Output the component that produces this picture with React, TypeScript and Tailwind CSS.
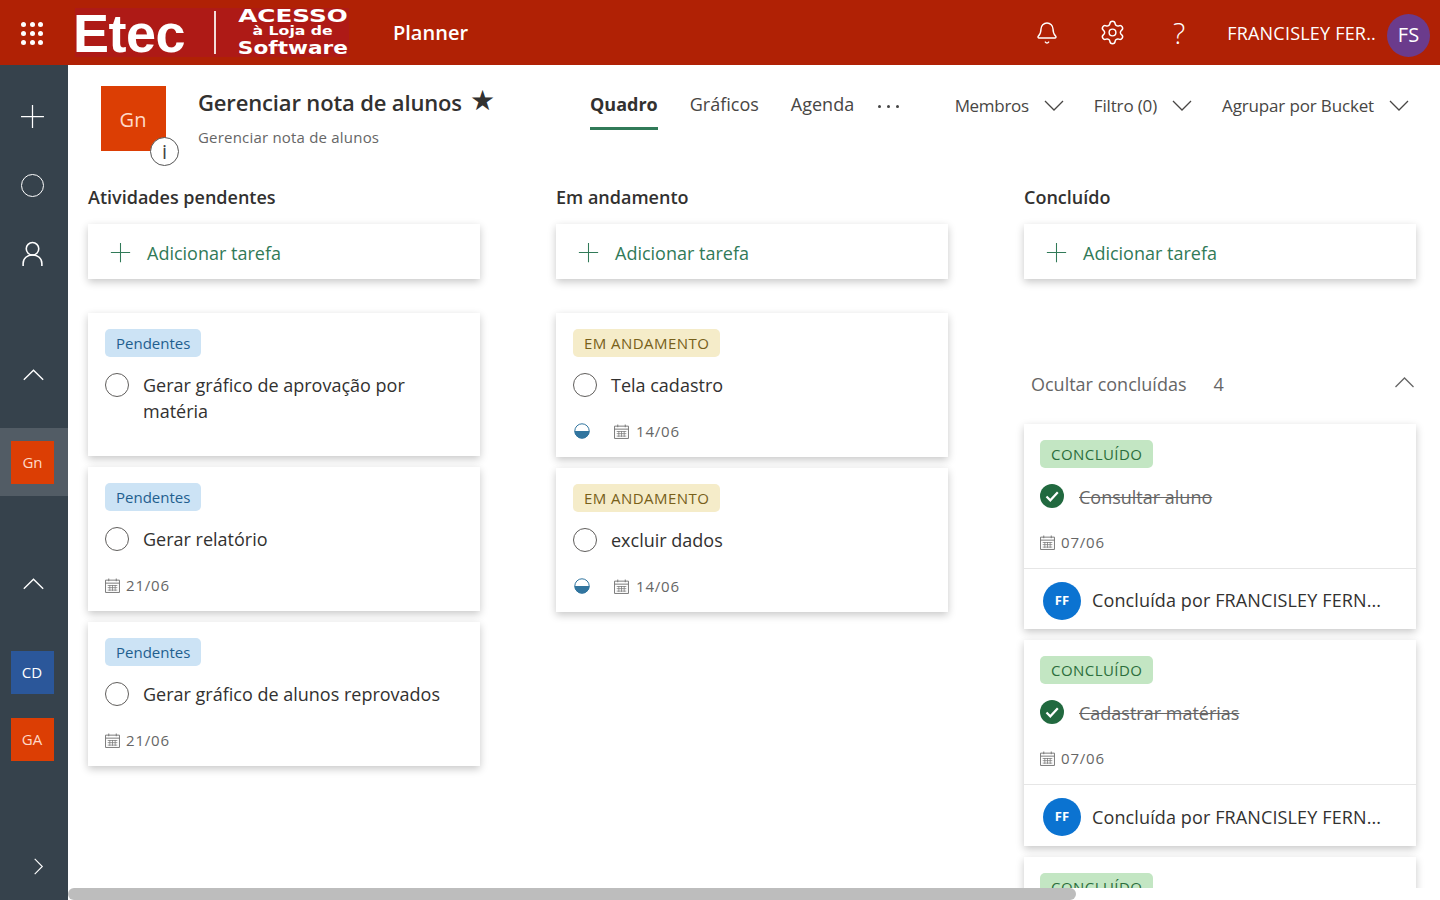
import { Bell, Settings } from 'lucide-react';

const sans = "font-['Open_Sans',sans-serif]";

const tagStyles = {
  blue: 'bg-[#cce3f5] text-[#1f5f8f]',
  yellow: 'bg-[#f5ecc9] text-[#77601a] tracking-[0.45px]',
  green: 'bg-[#c3e6c3] text-[#2c6e3c] tracking-[0.45px]',
};

type Tag = keyof typeof tagStyles;

function Plus({ className }: { className: string }) {
  return (
    <svg viewBox="0 0 24 24" className={className} fill="none" stroke="currentColor" strokeWidth="1.2">
      <path d="M12 1v22M1 12h22" />
    </svg>
  );
}

function Chevron({ dir, className }: { dir: 'up' | 'down' | 'right'; className: string }) {
  const d = dir === 'up' ? 'M1 11 10 2l9 9' : dir === 'down' ? 'M1 2l9 9 9-9' : 'M2 1l9 9-9 9';
  return (
    <svg viewBox={dir === 'right' ? '0 0 13 20' : '0 0 20 13'} className={className} fill="none" stroke="currentColor" strokeWidth="1.3">
      <path d={d} />
    </svg>
  );
}

function CalendarIcon() {
  return (
    <svg viewBox="1 1 14 14" className="h-[15px] w-[15px] shrink-0 text-[#777]" fill="none" stroke="currentColor" strokeWidth="0.9">
      <path d="M1.500 3h13v11.500h-13zM1.500 5.800h13M4.500 1.500V4M11.500 1.500V4" />
      <path d="M3.500 8h9M3.500 10h9M3.500 12.300h9M5.500 7.500v5.500M8 7.500v5.500M10.500 7.500v5.500" strokeWidth="0.7" />
    </svg>
  );
}

function HalfDone() {
  return (
    <svg viewBox="0 0 16 16" className="h-4 w-4 shrink-0">
      <circle cx="8" cy="8" r="7.200" fill="#fff" stroke="#31759f" strokeWidth="1" />
      <path d="M0.500 8a7.500 7.500 0 0 0 15 0z" fill="#31759f" />
    </svg>
  );
}

function Circle() {
  return <span className="h-6 w-6 shrink-0 rounded-full border-[1.5px] border-[#605e5c]" />;
}

function Checked() {
  return (
    <svg viewBox="0 0 24 24" className="h-6 w-6 shrink-0">
      <circle cx="12" cy="12" r="12" fill="#21693f" />
      <path d="M6.500 12.500l3.800 3.800 7.500-8" fill="none" stroke="#fff" strokeWidth="2.200" />
    </svg>
  );
}

function AddTask() {
  return (
    <div className="flex h-[55px] shrink-0 items-center bg-white pt-[2px] pl-[22px] text-[#317a58] shadow-[0_3px_8px_rgba(0,0,0,0.22)]">
      <Plus className="h-[21px] w-[21px]" />
      <span className="mt-px ml-[16px] text-[18px]">Adicionar tarefa</span>
    </div>
  );
}

function TaskCard({
  tag,
  tagText,
  title,
  date,
  progress,
  done,
  height,
  footer = 'h-[61px]',
}: {
  tag: Tag;
  tagText: string;
  title: string;
  date?: string;
  progress?: boolean;
  done?: boolean;
  height: string;
  footer?: string;
}) {
  return (
    <div className="shrink-0 bg-white shadow-[0_3px_8px_rgba(0,0,0,0.22)]">
      <div className={`flex flex-col pt-4 pr-[17px] ${done ? 'pl-4' : 'pl-[17px]'} ${height}`}>
        <span className={`flex h-7 w-fit items-center rounded-[5px] px-[11px] text-[15px] ${tagStyles[tag]}`}>{tagText}</span>
        <div className="mt-4 flex items-start">
          {done ? <Checked /> : <Circle />}
          <span className={`text-[18px] leading-[26px] ${done ? 'ml-[15px] text-[#666] line-through' : '-mt-px ml-[14px] text-[#323130]'}`}>{title}</span>
        </div>
        {date && (
          <div className={`flex items-center text-[15px] text-[#666] ${done ? 'mt-[21px]' : 'mt-[22px]'}`}>
            {progress && (
              <span className="mr-[24px] ml-px">
                <HalfDone />
              </span>
            )}
            <CalendarIcon />
            <span className={`tracking-[0.8px] ${progress ? 'ml-[7px]' : 'ml-[6px]'}`}>{date}</span>
          </div>
        )}
      </div>
      {done && (
        <div className={`flex items-center border-t border-[#e6e6e6] pt-[3px] pl-[19px] ${footer}`}>
          <span className="flex h-[38px] w-[38px] items-center justify-center rounded-full bg-[#0b73d1] text-[13px] font-bold text-white">FF</span>
          <span className="ml-[11px] text-[18px] tracking-[0.12px] text-[#323130]">Concluída por FRANCISLEY FERN...</span>
        </div>
      )}
    </div>
  );
}

function Tile({ text, color }: { text: string; color: string }) {
  return <span className={`flex h-[43px] w-[43px] items-center justify-center text-[15px] ${color}`}>{text}</span>;
}

function Rail() {
  const row = 'flex h-[68px] shrink-0 items-center justify-center';
  return (
    <aside className="flex w-[68px] shrink-0 flex-col bg-[#36424c] pt-[18px] text-white">
      <div className={`${row} pr-[3px] pb-[2px]`}>
        <Plus className="h-[25px] w-[25px]" />
      </div>
      <div className={`${row} pr-[3px]`}>
        <span className="h-[23px] w-[23px] rounded-full border-[1.5px] border-white" />
      </div>
      <div className={`${row} pr-[3px]`}>
        <svg viewBox="0 0 24 24" className="h-[25px] w-[25px]" fill="none" stroke="currentColor" strokeWidth="1.500">
          <circle cx="12" cy="7.500" r="6" />
          <path d="M3 24v-2.500c0-5 4-8 9-8s9 3 9 8V24" />
        </svg>
      </div>
      <div className={`${row} mt-[54px] pr-px`}>
        <Chevron dir="up" className="h-[14px] w-[23px]" />
      </div>
      <div className={`${row} mt-[19px] bg-[#525c65] pr-[3px]`}>
        <Tile text="Gn" color="bg-[#dc3e04] text-[#ffd9c8]" />
      </div>
      <div className={`${row} mt-[54px] pr-px`}>
        <Chevron dir="up" className="h-[14px] w-[23px]" />
      </div>
      <div className="mt-[33px] flex shrink-0 flex-col items-center gap-[24px] pr-[4px]">
        <Tile text="CD" color="bg-[#2b579a]" />
        <Tile text="GA" color="bg-[#dc3e04] text-[#ffd9c8]" />
      </div>
      <div className={`${row} mt-auto pl-[8px]`}>
        <Chevron dir="right" className="h-[17px] w-[11px]" />
      </div>
    </aside>
  );
}

function TopBar() {
  return (
    <header className="flex h-[65px] shrink-0 items-center bg-[#b02105] text-white">
      <div className="ml-[21px] grid h-[22px] w-[22px] grid-cols-3 gap-[4px]">
        {Array.from({ length: 9 }).map((_, i) => (
          <span key={i} className="h-[5px] w-[5px] rounded-full bg-white" />
        ))}
      </div>
      <div className="ml-[32px] flex h-[49px] w-[274px] items-center bg-[#ae1a16]">
        <span className="-ml-[2px] font-['Liberation_Sans',sans-serif] text-[54px] leading-none font-bold tracking-[-0.5px]">Etec</span>
        <span className="ml-[29px] h-[43px] w-[2px] bg-[#f3dcd8]" />
        <div className="-mt-[2px] ml-[22px] flex w-[110px] flex-col items-center font-['DejaVu_Sans',sans-serif] font-bold">
          <span className="origin-center scale-x-[1.37] text-[18px] leading-[18px]">ACESSO</span>
          <span className="origin-center scale-x-[1.31] text-[12px] leading-[13px]">à Loja de</span>
          <span className="mt-px origin-center scale-x-[1.2] text-[18px] leading-[18px]">Software</span>
        </div>
      </div>
      <span className="ml-[44px] text-[20px] font-semibold">Planner</span>
      <Bell className="ml-auto h-[24px] w-[24px]" strokeWidth={1.4} />
      <Settings className="ml-[40px] h-[27px] w-[27px]" strokeWidth={1.3} />
      <span className="ml-[47px] text-[29px] leading-none font-light">?</span>
      <span className="mt-px ml-[42px] text-[18px] tracking-[0.2px]">FRANCISLEY FER..</span>
      <span className="mt-[5px] mr-[10px] ml-[11px] flex h-[43px] w-[43px] items-center justify-center rounded-full bg-[#6b3b8c] text-[20px]">FS</span>
    </header>
  );
}

function PlanHeader() {
  return (
    <div className="flex h-[119px] shrink-0 items-start pt-[21px] pl-[33px]">
      <div className="relative h-[65px] w-[65px] shrink-0">
        <div className="flex h-full items-center justify-center bg-[#dc3e04] pt-[3px] pr-px text-[20px] text-[#ffd9c8]">Gn</div>
        <span className="absolute top-[51px] left-[49px] flex h-[29px] w-[29px] items-center justify-center rounded-full border border-[#555] bg-white text-[20px] text-[#444]">i</span>
      </div>
      <div className="ml-[32px] w-[392px] shrink-0">
        <div className="-mt-px flex items-start">
          <span className="text-[22px] leading-[34px] font-semibold tracking-[-0.15px] text-[#323130]">Gerenciar nota de alunos</span>
          <span className="ml-[8px] text-[28px] leading-[28px] text-[#323130]">★</span>
        </div>
        <div className="mt-[7px] text-[15px] tracking-[0.2px] text-[#666]">Gerenciar nota de alunos</div>
      </div>
      <nav className="mt-[5px] flex items-start gap-[32px] text-[18px] text-[#484644]">
        <span className="border-b-[3px] border-[#317a58] pb-[9px] font-bold text-[#323130]">Quadro</span>
        <span>Gráficos</span>
        <span>Agenda</span>
      </nav>
      <span className="ml-[24px] flex gap-[6px] pt-[19px]">
        <span className="h-[3px] w-[3px] rounded-full bg-[#444]" />
        <span className="h-[3px] w-[3px] rounded-full bg-[#444]" />
        <span className="h-[3px] w-[3px] rounded-full bg-[#444]" />
      </span>
      <div className="mt-[7px] ml-auto flex items-center pr-[31px] text-[17px] tracking-[-0.15px] text-[#484644]">
        <span className="tracking-[-0.3px]">Membros</span>
        <Chevron dir="down" className="ml-[15px] h-[13px] w-[20px]" />
        <span className="ml-[30px]">Filtro (0)</span>
        <Chevron dir="down" className="ml-[15px] h-[13px] w-[20px]" />
        <span className="ml-[30px]">Agrupar por Bucket</span>
        <Chevron dir="down" className="ml-[15px] h-[13px] w-[20px]" />
      </div>
    </div>
  );
}

export default function App() {
  const heading = 'h-[40px] shrink-0 text-[18px] leading-[26px] font-semibold text-[#323130]';
  return (
    <div className={`flex h-screen flex-col overflow-hidden bg-white ${sans}`}>
      <TopBar />
      <div className="flex min-h-0 flex-1">
        <Rail />
        <main className="flex min-w-0 flex-1 flex-col">
          <PlanHeader />
          <div className="flex min-h-0 flex-1 gap-[76px] overflow-hidden pl-[20px]">
            {/* Atividades pendentes */}
            <section className="flex w-[392px] shrink-0 flex-col">
              <h2 className={heading}>Atividades pendentes</h2>
              <AddTask />
              <div className="mt-[34px] flex flex-col gap-[11px]">
                <TaskCard tag="blue" tagText="Pendentes" title="Gerar gráfico de aprovação por matéria" height="h-[143px]" />
                <TaskCard tag="blue" tagText="Pendentes" title="Gerar relatório" date="21/06" height="h-[144px]" />
                <TaskCard tag="blue" tagText="Pendentes" title="Gerar gráfico de alunos reprovados" date="21/06" height="h-[144px]" />
              </div>
            </section>
            {/* Em andamento */}
            <section className="flex w-[392px] shrink-0 flex-col">
              <h2 className={heading}>Em andamento</h2>
              <AddTask />
              <div className="mt-[34px] flex flex-col gap-[11px]">
                <TaskCard tag="yellow" tagText="EM ANDAMENTO" title="Tela cadastro" date="14/06" progress height="h-[144px]" />
                <TaskCard tag="yellow" tagText="EM ANDAMENTO" title="excluir dados" date="14/06" progress height="h-[144px]" />
              </div>
            </section>
            {/* Concluído */}
            <section className="flex w-[392px] shrink-0 flex-col">
              <h2 className={heading}>Concluído</h2>
              <AddTask />
              <div className="mt-[92px] flex h-[26px] shrink-0 items-center pl-[7px] text-[18px] text-[#666]">
                <span>Ocultar concluídas</span>
                <span className="ml-[27px]">4</span>
                <Chevron dir="up" className="mb-[4px] ml-auto h-[13px] w-[23px]" />
              </div>
              <div className="mt-[27px] flex flex-col gap-[11px]">
                <TaskCard tag="green" tagText="CONCLUÍDO" title="Consultar aluno" date="07/06" done height="h-[144px]" />
                <TaskCard tag="green" tagText="CONCLUÍDO" title="Cadastrar matérias" date="07/06" done height="h-[144px]" footer="h-[62px]" />
                {/* cut off by the bottom of the board, only the tag shows */}
                <div className="h-[60px] shrink-0 bg-white pt-4 pl-4 shadow-[0_3px_8px_rgba(0,0,0,0.22)]">
                  <span className={`flex h-7 w-fit items-center rounded-[5px] px-[11px] text-[15px] ${tagStyles.green}`}>CONCLUÍDO</span>
                </div>
              </div>
            </section>
          </div>
          <div className="h-3 shrink-0 bg-white">
            <div className="h-full w-[1008px] rounded-[6px] bg-[#bdbdbd]" />
          </div>
        </main>
      </div>
    </div>
  );
}
